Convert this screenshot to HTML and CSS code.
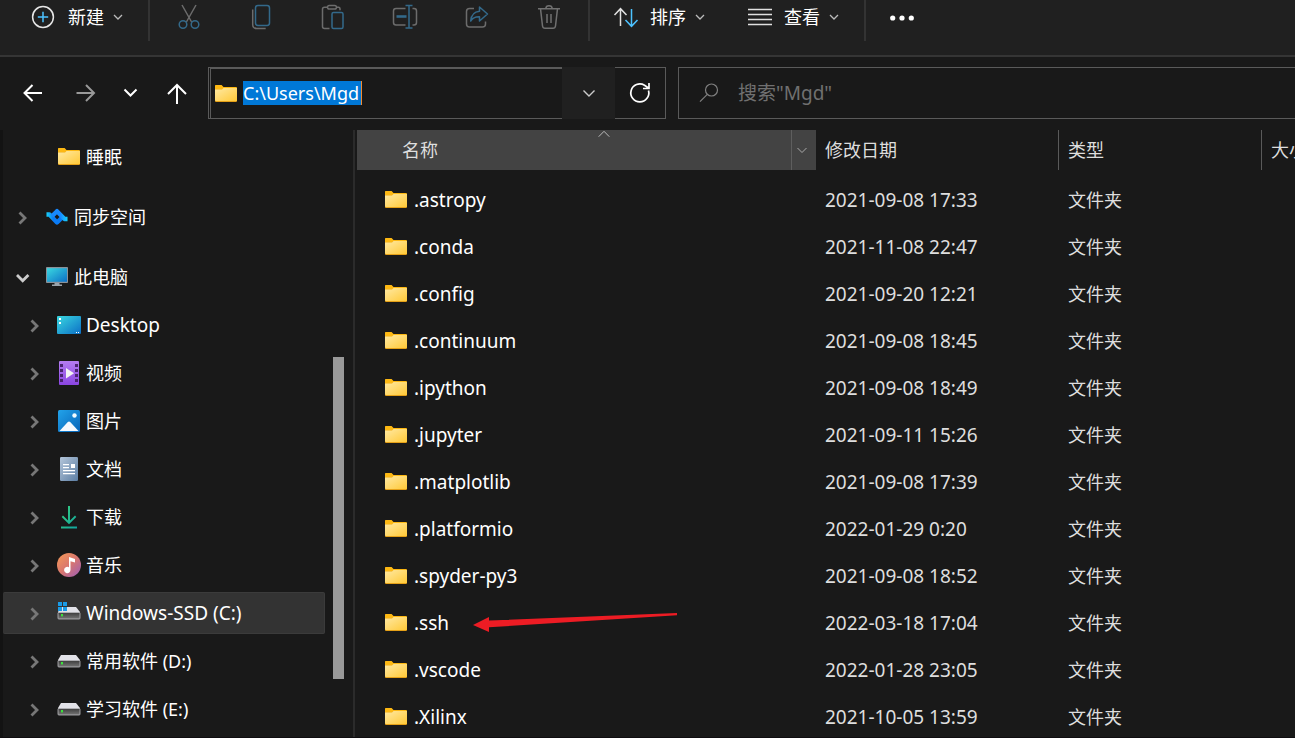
FILE: index.html
```html
<!DOCTYPE html>
<html lang="zh-CN">
<head>
<meta charset="utf-8">
<meta name="viewport" content="width=device-width, initial-scale=1">
<title>C:\Users\Mgd</title>
<link rel="stylesheet" href="styles.css">
</head>
<body>
<svg class="defs" width="0" height="0" aria-hidden="true">
  <defs>
    <linearGradient id="g-folder" x1="0" y1="0" x2="1" y2="1"><stop offset="0" stop-color="#ffe9a3"/><stop offset="1" stop-color="#ffc938"/></linearGradient>
    <linearGradient id="g-screen" x1="0" y1="0" x2="1" y2="1"><stop offset="0" stop-color="#3ad8e0"/><stop offset="1" stop-color="#0c6fc6"/></linearGradient>
    <linearGradient id="g-video" x1="0" y1="0" x2="0" y2="1"><stop offset="0" stop-color="#b47cf0"/><stop offset="1" stop-color="#8a45e2"/></linearGradient>
    <linearGradient id="g-pic" x1="0" y1="0" x2="1" y2="1"><stop offset="0" stop-color="#22a3ea"/><stop offset="1" stop-color="#0663b8"/></linearGradient>
    <linearGradient id="g-doc" x1="0" y1="0" x2="1" y2="1"><stop offset="0" stop-color="#b4c6da"/><stop offset="1" stop-color="#5c7ea3"/></linearGradient>
    <linearGradient id="g-down" x1="0" y1="0" x2="1" y2="1"><stop offset="0" stop-color="#37d27c"/><stop offset="1" stop-color="#10a3a0"/></linearGradient>
    <linearGradient id="g-music" x1="0" y1="0" x2="1" y2="1"><stop offset="0" stop-color="#f79a55"/><stop offset=".5" stop-color="#d9776f"/><stop offset="1" stop-color="#9a5cba"/></linearGradient>
    <linearGradient id="g-drive" x1="0" y1="0" x2="0" y2="1"><stop offset="0" stop-color="#3c3c3c"/><stop offset="1" stop-color="#777"/></linearGradient>
    <linearGradient id="g-sync-a" x1="0" y1="0" x2="1" y2="0"><stop offset="0" stop-color="#18d2f8"/><stop offset=".45" stop-color="#0a7bf5"/><stop offset="1" stop-color="#0a7bf5"/></linearGradient>
    <linearGradient id="g-sync-b" x1="0" y1="0" x2="1" y2="0"><stop offset="0" stop-color="#1789ff"/><stop offset=".55" stop-color="#1789ff"/><stop offset="1" stop-color="#18d2f8"/></linearGradient>
  </defs>
  <symbol id="i-folder" viewBox="0 0 22 18">
    <path d="M0 1.5Q0 1 .7 1H6.600L8.500 3H21Q22 3 22 4V8H0z" fill="#fdb813"/>
    <path d="M0 5.500H7L8.500 4H22V16.500Q22 18 21 18H1Q0 18 0 17z" fill="#e5a017"/>
    <path d="M0 5.500H7L8.500 4H22V16.400Q22 17 21 17H1Q0 17 0 16z" fill="url(#g-folder)"/>
  </symbol>
  <symbol id="i-drop" viewBox="0 0 12 12"><path d="M2 4l4 4 4-4" fill="none" stroke="currentColor" stroke-width="1.3"/></symbol>
  <symbol id="i-right" viewBox="0 0 16 16"><path d="M4.500 3.500L10 9l-5.500 5.500" fill="none" stroke="currentColor" stroke-width="2.800"/></symbol>
  <symbol id="i-open" viewBox="0 0 16 16"><path d="M2 6l5.700 5.700L13.400 6" fill="none" stroke="currentColor" stroke-width="2.800"/></symbol>
  <symbol id="i-drive" viewBox="0 0 24 24">
    <path d="M4 6H19L23 11V12H1V11z" fill="#e2e2e8"/>
    <rect x="1" y="11.500" width="22" height="6.500" rx=".8" fill="url(#g-drive)" stroke="#b9b9bd" stroke-width=".8"/>
    <rect x="4" y="13" width="2" height="2.400" fill="#3be33b"/>
  </symbol>
</svg>

<div class="app">
  <header class="toolbar">
    <div class="group group-new">
      <button class="tool tool-new" type="button">
        <svg width="24" height="24" viewBox="0 0 24 24" fill="none"><circle cx="12" cy="12" r="10.400" stroke="#e6e6e6" stroke-width="1.500"/><path d="M12 6.800v10.400M6.800 12h10.400" stroke="#4cc2ff" stroke-width="1.500"/></svg>
        <span>新建</span>
        <svg class="caret" width="12" height="12"><use href="#i-drop"/></svg>
      </button>
    </div>
    <div class="group group-edit">
      <button class="tool-icon" type="button" aria-label="剪切" disabled><svg width="26" height="26" viewBox="0 0 26 26" fill="none" stroke-width="1.500"><path d="M6 1l9.600 17M20 1l-9.600 17" stroke="#6c6c6c"/><circle cx="7" cy="20.500" r="3.800" stroke="#33698a"/><circle cx="19" cy="20.500" r="3.800" stroke="#33698a"/></svg></button>
      <button class="tool-icon" type="button" aria-label="复制" disabled><svg width="26" height="26" viewBox="0 0 26 26" fill="none" stroke-width="1.500"><path d="M4.700 5.500v15q0 4 4 4h9" stroke="#6c6c6c"/><rect x="7.500" y="1.500" width="14" height="20" rx="2.400" stroke="#33698a"/></svg></button>
      <button class="tool-icon" type="button" aria-label="粘贴" disabled><svg width="26" height="26" viewBox="0 0 26 26" fill="none" stroke-width="1.500"><path d="M8 3.200H4.500q-2 0-2 2V22.500q0 2 2 2H9.500M16.500 3.200h2q1.500 0 1.500 2v1" stroke="#6c6c6c"/><rect x="7.500" y="1.500" width="9" height="3.600" rx="1.800" stroke="#6c6c6c"/><rect x="12" y="8.600" width="11" height="16" rx="1.500" stroke="#33698a"/></svg></button>
      <button class="tool-icon" type="button" aria-label="重命名" disabled><svg width="26" height="26" viewBox="0 0 26 26" fill="none" stroke-width="1.500"><path d="M13.500 4.500H4Q1.500 4.500 1.500 7v11.500q0 2.500 2.500 2.500h9.500M20.500 4.500h1.500q2.500 0 2.500 2.500v11.500q0 2.500-2.500 2.500h-1.500" stroke="#6c6c6c"/><path d="M13.500 1.500h7M13.500 24h7M17 1.500V24" stroke="#33698a"/><path d="M4.500 12.500h10" stroke="#33698a" stroke-width="2.600"/></svg></button>
      <button class="tool-icon" type="button" aria-label="共享" disabled><svg width="26" height="26" viewBox="0 0 26 26" fill="none" stroke-width="1.500" stroke-linejoin="round"><path d="M10 4.500H5.500q-3 0-3 3V20q0 3 3 3h13q3 0 3-3v-2.500" stroke="#6c6c6c"/><path d="M15.500 3l8 7-8 7v-4.200q-6-.3-8.800 4.200Q7.500 8 15.500 7.300z" stroke="#33698a"/></svg></button>
      <button class="tool-icon" type="button" aria-label="删除" disabled><svg width="26" height="26" viewBox="0 0 26 26" fill="none" stroke="#707070" stroke-width="1.500"><path d="M2 4.700h22M4.500 4.700l2 17.300q.3 2.200 2.500 2.200h8q2.200 0 2.500-2.200l2-17.300M9.800 4.500Q10 1.700 13 1.700t3.200 2.800M11 10v9M15 10v9"/></svg></button>
    </div>
    <div class="group group-view">
      <button class="tool tool-sort" type="button">
        <svg width="28" height="24" viewBox="0 0 28 24" fill="none" stroke-width="1.500"><path d="M8.500 21V4M2.500 10l6-6.300 6 6.300" stroke="#e0e0e0"/><path d="M19.500 4v17M13.500 15l6 6.300 6-6.300" stroke="#4cc2ff"/></svg>
        <span>排序</span>
        <svg class="caret" width="12" height="12"><use href="#i-drop"/></svg>
      </button>
      <button class="tool tool-view" type="button">
        <svg width="24" height="24" viewBox="0 0 24 24" stroke="#e0e0e0" stroke-width="1.400"><path d="M0 4.500h24M0 9.500h24M0 14.500h24M0 19.500h24"/></svg>
        <span>查看</span>
        <svg class="caret" width="12" height="12"><use href="#i-drop"/></svg>
      </button>
    </div>
    <button class="tool more" type="button" aria-label="更多"><svg width="24" height="24" viewBox="0 0 24 24" fill="#fff"><circle cx="2.700" cy="13" r="2.600"/><circle cx="12" cy="13" r="2.600"/><circle cx="21.300" cy="13" r="2.600"/></svg></button>
  </header>

  <div class="navbar">
    <div class="history">
      <button class="nav back" type="button" aria-label="后退"><svg width="24" height="24" viewBox="0 0 24 24"><path d="M21 12H3.500M11.500 4l-8 8 8 8"/></svg></button>
      <button class="nav forward" type="button" aria-label="前进"><svg width="24" height="24" viewBox="0 0 24 24"><path d="M2.500 12h17.500M12 4l8 8-8 8"/></svg></button>
      <button class="nav recent" type="button" aria-label="最近的位置"><svg width="24" height="24" viewBox="0 0 24 24"><path d="M6.500 8.500l6 6 6-6"/></svg></button>
      <button class="nav up" type="button" aria-label="上移"><svg width="24" height="24" viewBox="0 0 24 24"><path d="M12 23V4.500M3 13l9-9 9 9"/></svg></button>
    </div>
    <div class="address">
      <label class="path">
        <svg width="22" height="18"><use href="#i-folder"/></svg>
        <input class="path-input" type="text" value="C:\Users\Mgd" aria-label="地址">
      </label>
      <button class="path-drop" type="button" aria-label="以前的位置"><svg width="18" height="18" viewBox="0 0 18 18" fill="none" stroke="#ccc" stroke-width="1.400"><path d="M3.500 6.500L9 12l5.500-5.500"/></svg></button>
      <button class="refresh" type="button" aria-label="刷新"><svg width="24" height="24" viewBox="0 0 24 24" fill="none" stroke="#fff" stroke-width="1.700"><path d="M20.500 9.500A9 9 0 1 1 16.500 4.200L20.500 7M21 2v5.500h-6"/></svg></button>
    </div>
    <label class="search">
      <svg width="20" height="20" viewBox="0 0 20 20" fill="none" stroke="#808080" stroke-width="1.200"><circle cx="12.500" cy="7" r="6"/><path d="M8.300 11.300L1 18.700"/></svg>
      <input class="search-input" type="text" placeholder="搜索&quot;Mgd&quot;" aria-label="搜索">
    </label>
  </div>

  <div class="body">
    <nav class="sidebar" aria-label="导航窗格">
      <ul class="tree">
        <li class="node child section"><span class="twist"></span><a class="node-link" href="#"><svg width="24" height="24" viewBox="-1 -2 24 24"><use href="#i-folder" width="22" height="18"/></svg>睡眠</a></li>
        <li class="node section"><button class="twist" type="button" aria-label="展开"><svg width="16" height="16"><use href="#i-right"/></svg></button><a class="node-link" href="#"><svg width="24" height="24" viewBox="0 0 24 24" fill="none" stroke-width="4.400" stroke-linejoin="round"><path d="M1.500 9.500h3L12 17.500l4.800-4.800" stroke="url(#g-sync-a)"/><path d="M22.500 14h-3L12 6.200l-4.800 4.800" stroke="url(#g-sync-b)"/></svg>同步空间</a></li>
        <li class="node"><button class="twist open" type="button" aria-label="折叠"><svg width="16" height="16"><use href="#i-open"/></svg></button><a class="node-link" href="#"><svg width="24" height="24" viewBox="0 0 24 24"><rect x="1" y="2" width="22" height="16" rx=".8" fill="#8a9199"/><rect x="2" y="3.200" width="20" height="13.600" fill="url(#g-screen)"/><path d="M9.500 18h5v1.500h2.500v1.500H7v-1.500h2.500z" fill="#9aa3ab"/></svg>此电脑</a></li>
        <li class="node child"><button class="twist" type="button" aria-label="展开"><svg width="16" height="16"><use href="#i-right"/></svg></button><a class="node-link latin" href="#"><svg width="24" height="24" viewBox="0 0 24 24"><rect x="0" y="3" width="24" height="18" rx="1" fill="url(#g-screen)"/><path d="M2 5h2v2H2zM2 9h2v2H2zM19 19h1v1h-1zM21 19h1v1h-1z" fill="#fff"/></svg>Desktop</a></li>
        <li class="node child"><button class="twist" type="button" aria-label="展开"><svg width="16" height="16"><use href="#i-right"/></svg></button><a class="node-link" href="#"><svg width="24" height="24" viewBox="0 0 24 24"><rect x="2" y="0" width="20" height="24" rx="1" fill="url(#g-video)"/><path d="M3 3h3v3H3zM3 8h3v3H3zM3 13h3v3H3zM3 18h3v3H3zM18 3h3v3h-3zM18 8h3v3h-3zM18 13h3v3h-3zM18 18h3v3h-3z" fill="#49236f"/><path d="M9 7v10.500l8-5.200z" fill="#f2f2f2"/></svg>视频</a></li>
        <li class="node child"><button class="twist" type="button" aria-label="展开"><svg width="16" height="16"><use href="#i-right"/></svg></button><a class="node-link" href="#"><svg width="24" height="24" viewBox="0 0 24 24"><rect x="1" y="1" width="22" height="22" rx="1.500" fill="url(#g-pic)"/><circle cx="17.500" cy="6.500" r="2.200" fill="#f0fbff"/><path d="M2.500 22l8.300-9q1.200-1.100 2.400 0L21.500 22z" fill="#f4f9fe"/></svg>图片</a></li>
        <li class="node child"><button class="twist" type="button" aria-label="展开"><svg width="16" height="16"><use href="#i-right"/></svg></button><a class="node-link" href="#"><svg width="24" height="24" viewBox="0 0 24 24"><rect x="3" y="0" width="18" height="24" rx="1.200" fill="url(#g-doc)"/><path d="M6 7h6v1.200H6zM6 10h6v1.200H6zM6 13h12v1.200H6zM6 16h12v1.200H6zM14 7h4v4h-4z" fill="#fff"/></svg>文档</a></li>
        <li class="node child"><button class="twist" type="button" aria-label="展开"><svg width="16" height="16"><use href="#i-right"/></svg></button><a class="node-link" href="#"><svg width="24" height="24" viewBox="0 0 24 24"><path d="M11 1h2v14.500l5-5 1.300 1.500L12 19.200 4.700 12 6 10.500l5 5zM4 21.500h16v2H4z" fill="url(#g-down)"/></svg>下载</a></li>
        <li class="node child"><button class="twist" type="button" aria-label="展开"><svg width="16" height="16"><use href="#i-right"/></svg></button><a class="node-link" href="#"><svg width="24" height="24" viewBox="0 0 24 24"><circle cx="12" cy="12" r="12" fill="url(#g-music)"/><path d="M12 4l6 2v3.500l-4.500-1.300V17a3.200 3.200 0 1 1-1.500-2.700z" fill="#fff"/></svg>音乐</a></li>
        <li class="node child selected"><button class="twist" type="button" aria-label="展开"><svg width="16" height="16"><use href="#i-right"/></svg></button><a class="node-link latin" href="#" aria-current="true"><svg width="24" height="24" viewBox="0 0 24 24"><use href="#i-drive"/><path d="M1 1h4v4H1zM6 1h4v4H6zM1 6h4v4H1zM6 6h4v4H6z" fill="#1a9be6"/></svg>Windows-SSD (C:)</a></li>
        <li class="node child"><button class="twist" type="button" aria-label="展开"><svg width="16" height="16"><use href="#i-right"/></svg></button><a class="node-link" href="#"><svg width="24" height="24"><use href="#i-drive"/></svg>常用软件 (D:)</a></li>
        <li class="node child"><button class="twist" type="button" aria-label="展开"><svg width="16" height="16"><use href="#i-right"/></svg></button><a class="node-link" href="#"><svg width="24" height="24"><use href="#i-drive"/></svg>学习软件 (E:)</a></li>
      </ul>
      <div class="scrollbar"><div class="thumb"></div></div>
    </nav>

    <main class="content">
      <table class="files">
        <colgroup><col class="col-name"><col class="col-date"><col class="col-type"><col></colgroup>
        <thead>
          <tr>
            <th class="sorted" scope="col" aria-sort="ascending">
              <div class="head-name"><span class="head-label">名称</span>
                <svg class="sort-mark" width="12" height="8" viewBox="0 0 12 8" fill="none" stroke="#bbb"><path d="M.7 6.700L6 1.300l5.300 5.400"/></svg>
                <button class="filter" type="button" aria-label="筛选"><svg width="12" height="12" viewBox="0 0 12 12" fill="none" stroke="currentColor"><path d="M1.500 4L6 8.500 10.500 4"/></svg></button></div>
            </th>
            <th scope="col">修改日期</th><th scope="col">类型</th><th scope="col">大小</th>
          </tr>
        </thead>
        <tbody>
          <tr><td><a class="file" href="#"><svg width="22" height="18"><use href="#i-folder"/></svg>.astropy</a></td><td class="date">2021-09-08 17:33</td><td>文件夹</td><td></td></tr>
          <tr><td><a class="file" href="#"><svg width="22" height="18"><use href="#i-folder"/></svg>.conda</a></td><td class="date">2021-11-08 22:47</td><td>文件夹</td><td></td></tr>
          <tr><td><a class="file" href="#"><svg width="22" height="18"><use href="#i-folder"/></svg>.config</a></td><td class="date">2021-09-20 12:21</td><td>文件夹</td><td></td></tr>
          <tr><td><a class="file" href="#"><svg width="22" height="18"><use href="#i-folder"/></svg>.continuum</a></td><td class="date">2021-09-08 18:45</td><td>文件夹</td><td></td></tr>
          <tr><td><a class="file" href="#"><svg width="22" height="18"><use href="#i-folder"/></svg>.ipython</a></td><td class="date">2021-09-08 18:49</td><td>文件夹</td><td></td></tr>
          <tr><td><a class="file" href="#"><svg width="22" height="18"><use href="#i-folder"/></svg>.jupyter</a></td><td class="date">2021-09-11 15:26</td><td>文件夹</td><td></td></tr>
          <tr><td><a class="file" href="#"><svg width="22" height="18"><use href="#i-folder"/></svg>.matplotlib</a></td><td class="date">2021-09-08 17:39</td><td>文件夹</td><td></td></tr>
          <tr><td><a class="file" href="#"><svg width="22" height="18"><use href="#i-folder"/></svg>.platformio</a></td><td class="date">2022-01-29 0:20</td><td>文件夹</td><td></td></tr>
          <tr><td><a class="file" href="#"><svg width="22" height="18"><use href="#i-folder"/></svg>.spyder-py3</a></td><td class="date">2021-09-08 18:52</td><td>文件夹</td><td></td></tr>
          <tr><td class="marked"><a class="file" href="#"><svg width="22" height="18"><use href="#i-folder"/></svg>.ssh</a><svg class="arrow" width="206" height="22" viewBox="0 0 206 22"><path d="M0 13L16 5v3.500L204 1v2.200L16 15.300V20z" fill="#ed1c24"/></svg></td><td class="date">2022-03-18 17:04</td><td>文件夹</td><td></td></tr>
          <tr><td><a class="file" href="#"><svg width="22" height="18"><use href="#i-folder"/></svg>.vscode</a></td><td class="date">2022-01-28 23:05</td><td>文件夹</td><td></td></tr>
          <tr><td><a class="file" href="#"><svg width="22" height="18"><use href="#i-folder"/></svg>.Xilinx</a></td><td class="date">2021-10-05 13:59</td><td>文件夹</td><td></td></tr>
        </tbody>
      </table>
    </main>
  </div>
</div>
</body>
</html>
```
FILE: styles.css
```css
* { box-sizing: border-box; }

body {
  margin: 0;
  background: #191919;
  color: #fff;
  font: 18px/24px "Noto Sans", "Noto Sans CJK SC", sans-serif;
  overflow: hidden;
}

button, input {
  margin: 0;
  padding: 0;
  border: 0;
  background: none;
  color: inherit;
  font: inherit;
}

a { color: inherit; text-decoration: none; }
svg { display: block; flex: none; }
.defs { position: absolute; }

.app {
  display: flex;
  flex-direction: column;
  height: 100vh;
  border-bottom: 1px solid #0f0d10;
}

/* Command bar */
.toolbar {
  display: flex;
  flex: none;
  align-items: flex-start;
  padding-bottom: 14px;
  background: #202020;
  border-bottom: 2px solid #353535;
}

.group {
  display: flex;
  height: 41px;
  padding-bottom: 7px;
  border-right: 2px solid #333;
}

.group-new { padding-left: 31px; padding-right: 24px; }
.group-edit { gap: 24px; padding-left: 15px; padding-right: 15px; }
.group-view { gap: 42px; padding-left: 22px; padding-right: 24px; }

.tool {
  display: flex;
  align-items: center;
  height: 34px;
  white-space: nowrap;
}

.tool-new { gap: 13px; }
.tool-sort { gap: 10px; }
.tool-view { gap: 12px; }
.caret { color: #bbb; }
.tool-new .caret { margin-left: -5px; }
.tool-sort .caret { margin-left: -2px; }
.tool-view .caret { margin-left: -4px; }

.tool-icon {
  display: grid;
  place-items: center;
  width: 48px;
  height: 34px;
}

.more { margin-left: 24px; }

/* Navigation and address bar */
.navbar {
  display: flex;
  flex: none;
  padding: 10px 0 11px 7px;
}

.history { display: flex; margin-right: 1px; }

.nav {
  display: grid;
  place-items: center;
  height: 52px;
}

.nav svg {
  fill: none;
  stroke: #fff;
  stroke-width: 2;
}

.back { width: 52px; }
.forward { width: 54px; }
.forward svg { stroke: #999; }
.recent { width: 34px; }
.up { width: 60px; }

.address {
  display: flex;
  flex: none;
  width: 458px;
  height: 52px;
}

.path {
  display: flex;
  flex: 1;
  align-items: center;
  gap: 6px;
  padding: 0 0 2px 4px;
  border: 1px solid #5a5a5a;
  border-top-width: 2px;
  border-left: 3px double #5a5a5a;
  border-right: 0;
}

.path-input {
  width: 119px;
  height: 24px;
  background: #0078d7;
  border-right: 1px solid #f08a32;
}

.path-drop {
  display: grid;
  place-items: center;
  width: 53px;
  background: #202020;
}

.refresh {
  display: grid;
  place-items: center;
  width: 51px;
  border: 1px solid #5a5a5a;
  border-left: 0;
}

.search {
  display: flex;
  flex: 1;
  align-items: center;
  gap: 19px;
  height: 52px;
  margin-left: 12px;
  padding-left: 20px;
  border: 1px solid #5a5a5a;
  border-right: 0;
}

.search-input { flex: 1; min-width: 0; font-size: 19px; }
.search-input::placeholder { color: #707070; opacity: 1; }

/* Folder tree */
.body {
  display: flex;
  flex: 1;
  min-height: 0;
}

.sidebar {
  display: flex;
  flex: none;
  width: 355px;
  margin-right: 2px;
  border-left: 3px solid #131313;
  border-right: 2px solid #2b2b2b;
}

.tree {
  flex: none;
  width: 322px;
  margin: 0;
  padding: 6px 0 0;
  list-style: none;
  overflow: hidden;
}

.node {
  display: flex;
  align-items: center;
  gap: 14px;
  height: 42px;
  margin-bottom: 6px;
  padding-left: 12px;
}

.section { margin-bottom: 18px; }
.child { padding-left: 24px; }

.selected {
  background: #333;
  border: 1px solid #3b3b3b;
  border-left: 0;
  border-radius: 2px;
}

.twist {
  flex: none;
  width: 16px;
  height: 16px;
  color: #777;
}

.open { color: #ccc; }

.node-link {
  display: flex;
  align-items: center;
  gap: 5px;
  white-space: nowrap;
}

.latin { font-size: 19px; }

.scrollbar {
  display: flex;
  flex-direction: column;
  width: 19px;
  padding-left: 8px;
}

.scrollbar::before { content: ""; flex: 227; }
.scrollbar::after { content: ""; flex: 58; }

.thumb { flex: 322; background: #999; }

/* File list */
.content {
  flex: 1;
  min-width: 0;
  overflow: hidden;
}

.files {
  width: 100%;
  border-collapse: separate;
  border-spacing: 0;
  table-layout: fixed;
}

.col-name { width: 459px; }
.col-date { width: 243px; }
.col-type { width: 203px; }

th {
  height: 40px;
  padding: 0 0 0 9px;
  border-right: 1px solid #5a5a5a;
  color: #dedede;
  font-weight: 400;
  text-align: left;
  white-space: nowrap;
  overflow: hidden;
}

th:last-child { border-right: 0; }
.sorted { padding: 0; border-right: 0; background: #434343; }

.head-name {
  position: relative;
  display: flex;
  align-items: center;
  height: 40px;
  padding-left: 45px;
}

.head-label { flex: 1; }

.sort-mark {
  position: absolute;
  top: 0;
  left: 241px;
}

.filter {
  display: grid;
  place-items: center;
  width: 25px;
  height: 40px;
  padding-right: 4px;
  border-left: 1px solid #5e5e5e;
  color: #aaa;
}

tbody::before { content: ""; display: block; height: 6px; }

td {
  height: 47px;
  padding: 0 0 0 9px;
  color: #dedede;
  white-space: nowrap;
}

td:first-child { padding-left: 28px; }

.file {
  display: flex;
  align-items: center;
  gap: 7px;
  color: #fff;
  font-size: 19px;
}

.file svg { margin-bottom: 2px; }
.date { font-size: 19px; }
.marked { position: relative; }

.arrow {
  position: absolute;
  top: 13px;
  left: 116px;
}
```
